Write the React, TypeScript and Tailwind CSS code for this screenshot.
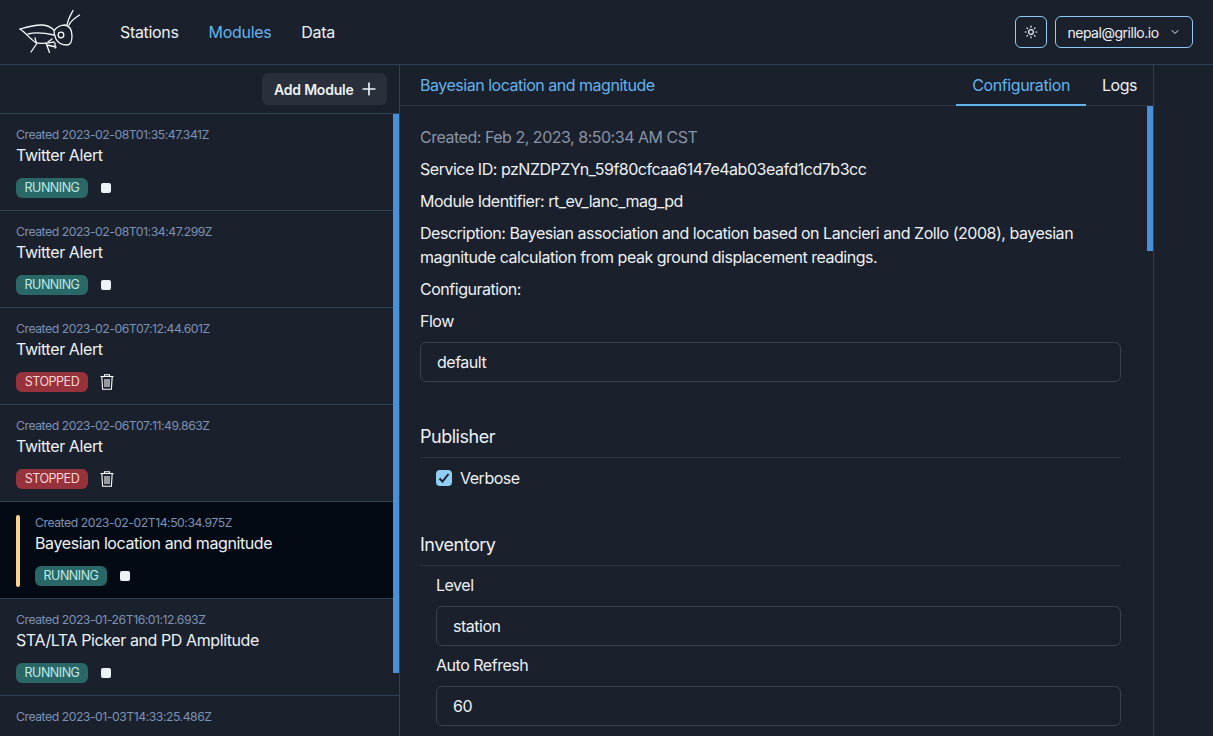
import { ChevronDown, Plus, Sun } from 'lucide-react';

const modules = [
  { created: '2023-02-08T01:35:47.341Z', name: 'Twitter Alert', status: 'RUNNING' },
  { created: '2023-02-08T01:34:47.299Z', name: 'Twitter Alert', status: 'RUNNING' },
  { created: '2023-02-06T07:12:44.601Z', name: 'Twitter Alert', status: 'STOPPED' },
  { created: '2023-02-06T07:11:49.863Z', name: 'Twitter Alert', status: 'STOPPED' },
  { created: '2023-02-02T14:50:34.975Z', name: 'Bayesian location and magnitude', status: 'RUNNING', selected: true },
  { created: '2023-01-26T16:01:12.693Z', name: 'STA/LTA Picker and PD Amplitude', status: 'RUNNING' },
];

function Logo() {
  return (
    <svg width="62" height="46" viewBox="19 8 62 46" fill="none" stroke="#f7fafc" strokeWidth="1.3" strokeLinecap="round" strokeLinejoin="round">
      <path d="M20 28 C27 26 35 24 41 24 C46 24 51 26 54 29" />
      <path d="M20 28 C25 31 29 37 35 41 C40 44 48 42 54 41" />
      <path d="M28 33 C36 31 45 32 54 34" />
      <path d="M54 30 C56 26 61 24 65 24 C70 25 72 30 72 35 C72 40 71 44 67 44 C62 44 58 42 56 38 C55 35 54 33 54 30 Z" />
      <circle cx="61" cy="34" r="2.8" />
      <path d="M67 24 C68 18 71 13 73 9.5 M69 24 C71 19 75 17 79.5 14" />
      <path d="M35 37 L36.5 43 L31 51 M46 42 L49.5 51.5 M48 41 L52 38 M47 44 L56 46 M55 42 L55 47" />
    </svg>
  );
}

function TrashIcon() {
  return (
    <svg width="14" height="16" viewBox="0 0 14 16" fill="none" stroke="white" strokeWidth="1.1" className="shrink-0">
      <path d="M0.5 2.5 H13.5" />
      <path d="M4.5 2.5 V0.8 H9.5 V2.5" />
      <path d="M1.8 2.5 L2.6 15.2 H11.4 L12.2 2.5" />
      <path d="M5 5 V13 M7 5 V13 M9 5 V13" />
    </svg>
  );
}

function ModuleRow({ created, name, status, selected }: { created: string; name?: string; status?: string; selected?: boolean }) {
  const running = status === 'RUNNING';
  return (
    <div className={`flex h-[97px] shrink-0 gap-[15px] border-b border-[#2d4154] p-[16px] pt-[13px] ${selected ? 'bg-[#030a14]' : ''}`}>
      {selected && <div className="h-[72px] w-[4px] rounded-sm bg-[#fbd38d]" />}
      <div className="min-w-0">
        <div className="text-[12.25px] leading-[16px] text-[#7d92b5]">Created {created}</div>
        {name && <div className="text-[16px] leading-[24px] tracking-[-0.025em] text-[#edf2f7]">{name}</div>}
        {status && (
          <div className="mt-[11px] flex items-center gap-[12px]">
            <span className={`flex h-[20px] w-[72px] items-center justify-center rounded-[6px] text-[12.5px] ${running ? 'bg-[#2a6767] text-[#bfeae5]' : 'bg-[#96323b] text-[#fbd5d5]'}`}>
              {status}
            </span>
            {running ? <span className="ml-[1px] h-[10px] w-[10px] rounded-[2px] bg-[#edf2f7]" /> : <TrashIcon />}
          </div>
        )}
      </div>
    </div>
  );
}

function TextInput({ value }: { value: string }) {
  return (
    <div className="flex h-[40px] items-center rounded-md border border-[#3a4250] px-[16px] text-[16px] text-[#edf2f7]">{value}</div>
  );
}

function SectionTitle({ title }: { title: string }) {
  return <div className="border-b border-[#2d3340] pb-[8px] text-[18px] leading-[24px] text-[#edf2f7]">{title}</div>;
}

export default function App() {
  return (
    <div className="flex h-screen flex-col overflow-hidden bg-[#1a202c] font-['Inter',sans-serif] tracking-[-0.03em]">
      <header className="flex h-[65px] shrink-0 items-center border-b border-[#2d4154] pl-[19px] pr-[20px]">
        <div className="w-[81px]">
          <Logo />
        </div>
        <nav className="ml-[20px] flex gap-[30px] text-[16px] tracking-[-0.02em]">
          <span className="text-[#edf2f7]">Stations</span>
          <span className="text-[#63b3ed]">Modules</span>
          <span className="text-[#edf2f7]">Data</span>
        </nav>
        <div className="ml-auto flex gap-[8px]">
          <button className="flex h-[32px] w-[32px] items-center justify-center rounded-md border border-[#90cdf4] text-[#edf2f7]">
            <Sun size={14} />
          </button>
          <button className="flex h-[32px] w-[138px] items-center justify-center gap-[10px] rounded-md border border-[#90cdf4] text-[14px] text-[#edf2f7]">
            nepal@grillo.io
            <ChevronDown size={12} />
          </button>
        </div>
      </header>

      <div className="flex min-h-0 flex-1">
        <aside className="flex w-[400px] shrink-0 flex-col border-r border-[#2d4154]">
          <div className="flex h-[49px] shrink-0 items-start justify-end border-b border-[#2d4154] pr-[12px] pt-[8px]">
            <button className="flex h-[32px] w-[125px] items-center gap-[5px] rounded-md bg-[#2a2f3c] pl-[12px] text-[14px] font-semibold tracking-[-0.015em] text-[#edf2f7]">
              Add Module
              <Plus size={20} />
            </button>
          </div>
          <div className="relative min-h-0 flex-1 overflow-hidden">
            {modules.map((m) => (
              <ModuleRow key={m.created} {...m} />
            ))}
            <ModuleRow created="2023-01-03T14:33:25.486Z" />
            <div className="absolute right-0 top-0 h-[559px] w-[6px] bg-[#4a90d9]" />
          </div>
        </aside>

        <main className="flex w-[754px] shrink-0 flex-col border-r border-[#2d4154]">
          <div className="flex h-[41px] shrink-0 items-center justify-between border-b border-[#2d3340] pl-[20px]">
            <span className="text-[16px] text-[#63b3ed]">Bayesian location and magnitude</span>
            <div className="flex h-full text-[16px]">
              <span className="-mb-px flex h-[41px] items-center border-b-2 border-[#63b3ed] px-[16px] tracking-[-0.025em] text-[#63b3ed]">Configuration</span>
              <span className="flex h-full items-center px-[16px] text-[#edf2f7]">Logs</span>
            </div>
          </div>
          <div className="relative min-h-0 flex-1 overflow-hidden pl-[20px] pr-[32px] pt-[19px] text-[16px] leading-[24px] text-[#edf2f7]">
            <div className="absolute right-0 top-0 h-[145px] w-[6px] bg-[#4a90d9]" />
            <div className="flex flex-col gap-[8px]">
              <p className="text-[#8a94a6]">Created: Feb 2, 2023, 8:50:34 AM CST</p>
              <p>Service ID: pzNZDPZYn_59f80cfcaa6147e4ab03eafd1cd7b3cc</p>
              <p>Module Identifier: rt_ev_lanc_mag_pd</p>
              <p>Description: Bayesian association and location based on Lancieri and Zollo (2008), bayesian magnitude calculation from peak ground displacement readings.</p>
              <p>Configuration:</p>
              <p>Flow</p>
            </div>
            <div className="mt-[9px]">
              <TextInput value="default" />
            </div>
            <div className="mt-[43px]">
              <SectionTitle title="Publisher" />
              <label className="ml-[16px] mt-[8px] flex items-center gap-[8px]">
                <span className="flex h-[16px] w-[16px] items-center justify-center rounded-sm bg-[#90cdf4]">
                  <svg width="12" height="12" viewBox="0 0 12 12" fill="none" stroke="#1a202c" strokeWidth="2">
                    <path d="M1.5 6.5 L4.5 9.5 L10.5 2" />
                  </svg>
                </span>
                Verbose
              </label>
            </div>
            <div className="mt-[43px]">
              <SectionTitle title="Inventory" />
              <div className="ml-[16px] mt-[7px]">
                <p>Level</p>
                <div className="mt-[9px]">
                  <TextInput value="station" />
                </div>
                <p className="mt-[7px]">Auto Refresh</p>
                <div className="mt-[9px]">
                  <TextInput value="60" />
                </div>
              </div>
            </div>
          </div>
        </main>
      </div>
    </div>
  );
}
